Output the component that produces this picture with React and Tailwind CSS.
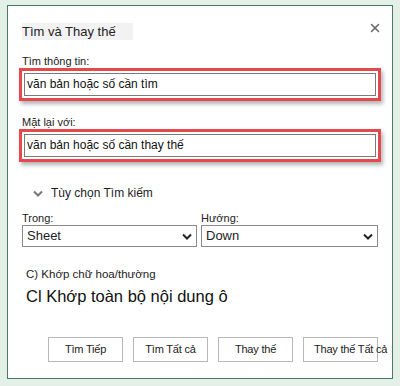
import { X } from 'lucide-react';

function RedField({ value }) {
  return (
    <div className="-mx-[3px] border-[3px] border-[#e5484d] p-[2px] shadow-[2px_3px_4px_rgba(0,0,0,0.3)]">
      <div className="h-[23px] border border-[#7a7a7a] bg-white px-[2px] text-[12px] leading-[21px] text-[#111]">
        {value}
      </div>
    </div>
  );
}

function Select({ value, className }) {
  return (
    <div className={`flex h-[22px] items-center justify-between border border-[#8a8a8a] bg-white pl-[4px] pr-[4px] text-[13px] text-[#222] ${className}`}>
      <span>{value}</span>
      <svg width="10" height="7" viewBox="0 0 10 7">
        <path d="M1 1.5 L5 5.5 L9 1.5" fill="none" stroke="#222" strokeWidth="2" />
      </svg>
    </div>
  );
}

function Btn({ children, className = '' }) {
  return (
    <div className={`flex h-[25px] w-[75px] items-center justify-center whitespace-nowrap border border-[#b8b8b8] bg-white text-[11px] tracking-[-0.2px] text-[#222] ${className}`}>
      {children}
    </div>
  );
}

export default function App() {
  return (
    <div
      className="h-[386px] w-[400px] overflow-hidden bg-[#e4efe8] pl-[7px] pt-[5px]"
      style={{ fontFamily: '"Liberation Sans", Arial, sans-serif' }}
    >
      <div className="relative h-[374px] w-[386px] border border-[#4a7a62] bg-white px-[14px]">
        <button className="absolute right-[10px] top-[15px] text-[#6b6b6b]">
          <X size={14} strokeWidth={2.6} />
        </button>

        <div className="mt-[17px] h-[17px] w-[111px] bg-[#f2f2f2] text-[13px] leading-[17px] text-[#222]">
          Tìm và Thay thế
        </div>

        <div className="mt-[14px] text-[11px] leading-[14px] text-[#222]">Tìm thông tin:</div>
        <RedField value="văn bản hoặc số cần tìm" />

        <div className="mt-[14px] text-[11px] leading-[14px] text-[#222]">Mặt lại với:</div>
        <RedField value="văn bản hoặc số cần thay thế" />

        <div className="mt-[22px] flex items-center gap-[8px] pl-[11px] text-[12px] text-[#222]">
          <svg width="10" height="7" viewBox="0 0 10 7">
            <path d="M1 1.5 L5 5.5 L9 1.5" fill="none" stroke="#777" strokeWidth="2" />
          </svg>
          <span>Tùy chọn Tìm kiếm</span>
        </div>

        <div className="mt-[9px] flex gap-[4px]">
          <div className="w-[176px]">
            <div className="text-[11px] leading-[14px] text-[#222]">Trong:</div>
            <Select value="Sheet" />
          </div>
          <div className="w-[178px]">
            <div className="text-[11px] leading-[14px] text-[#222]">Hướng:</div>
            <Select value="Down" />
          </div>
        </div>

        <div className="mt-[20px] pl-[4px] text-[11.5px] leading-[14px] text-[#222]">C) Khớp chữ hoa/thường</div>
        <div className="mt-[5px] pl-[4px] text-[16.5px] leading-[20px] text-[#111]">Cl Khớp toàn bộ nội dung ô</div>

        <div className="mt-[31px] flex gap-[10px] pl-[26px]">
          <Btn>Tìm Tiếp</Btn>
          <Btn>Tìm Tất cả</Btn>
          <Btn>Thay thế</Btn>
          <Btn className="justify-start pl-[10px]">Thay thế Tất cả</Btn>
        </div>
      </div>
    </div>
  );
}
